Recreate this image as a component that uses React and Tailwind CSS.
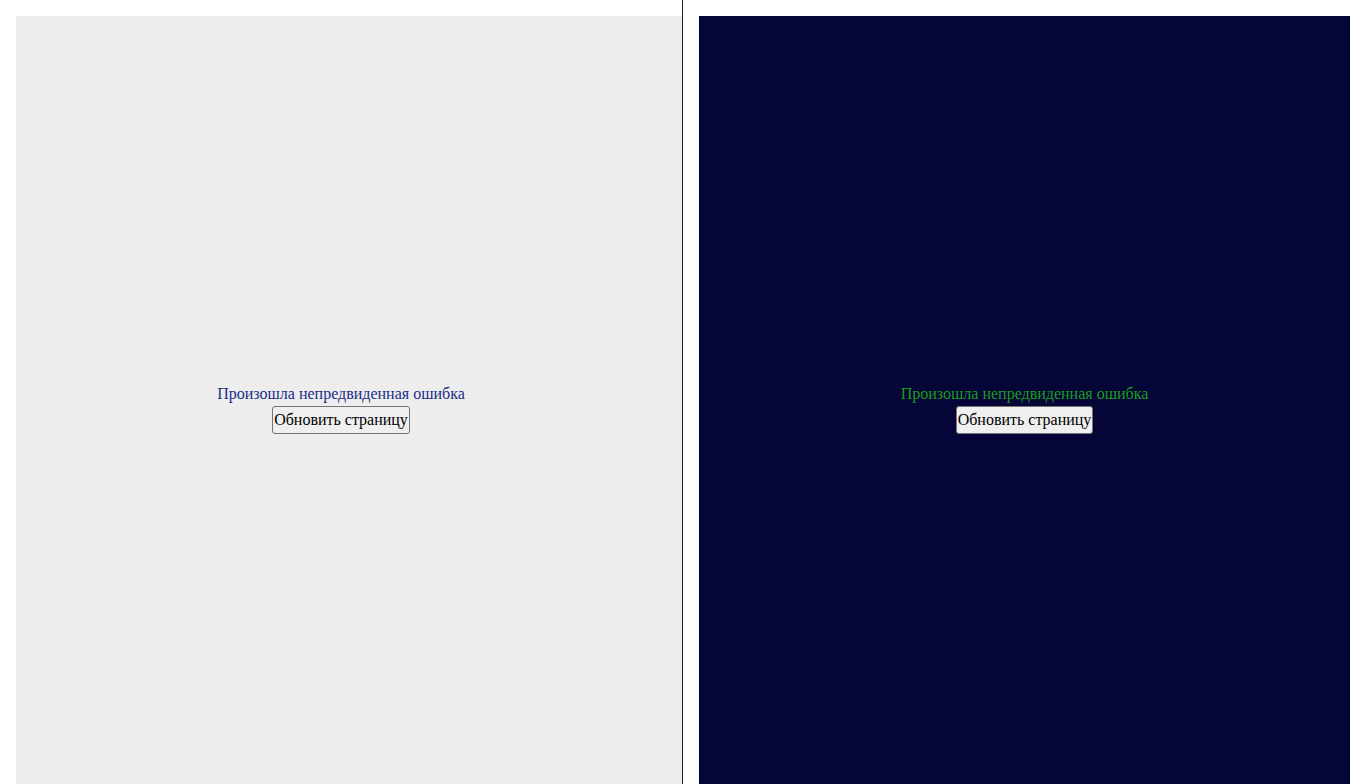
import React from 'react';

const ErrorPanel = ({ dark }) => (
  <div
    className={
      'h-screen flex flex-col items-center justify-center pt-[3px] ' +
      (dark ? 'bg-[#050538]' : 'bg-[#ededed] pr-4')
    }
  >
    <p className={dark ? 'text-[#1a9e1a]' : 'text-[#1b2d87]'}>
      Произошла непредвиденная ошибка
    </p>
    <button
      onClick={() => window.location.reload()}
      className="mt-[3px] py-1 px-[1px] border border-[#767676] rounded-[3px] bg-[#efefef] text-black"
    >
      Обновить страницу
    </button>
  </div>
);

export default function App() {
  return (
    <div className="grid grid-cols-2 font-['Liberation_Serif',serif] text-base leading-[18px] h-[784px] overflow-hidden bg-white">
      {/* светлая тема */}
      <div className="pl-4 pt-4 border-r border-[#222]">
        <ErrorPanel />
      </div>
      {/* тёмная тема */}
      <div className="px-4 pt-4">
        <ErrorPanel dark />
      </div>
    </div>
  );
}
